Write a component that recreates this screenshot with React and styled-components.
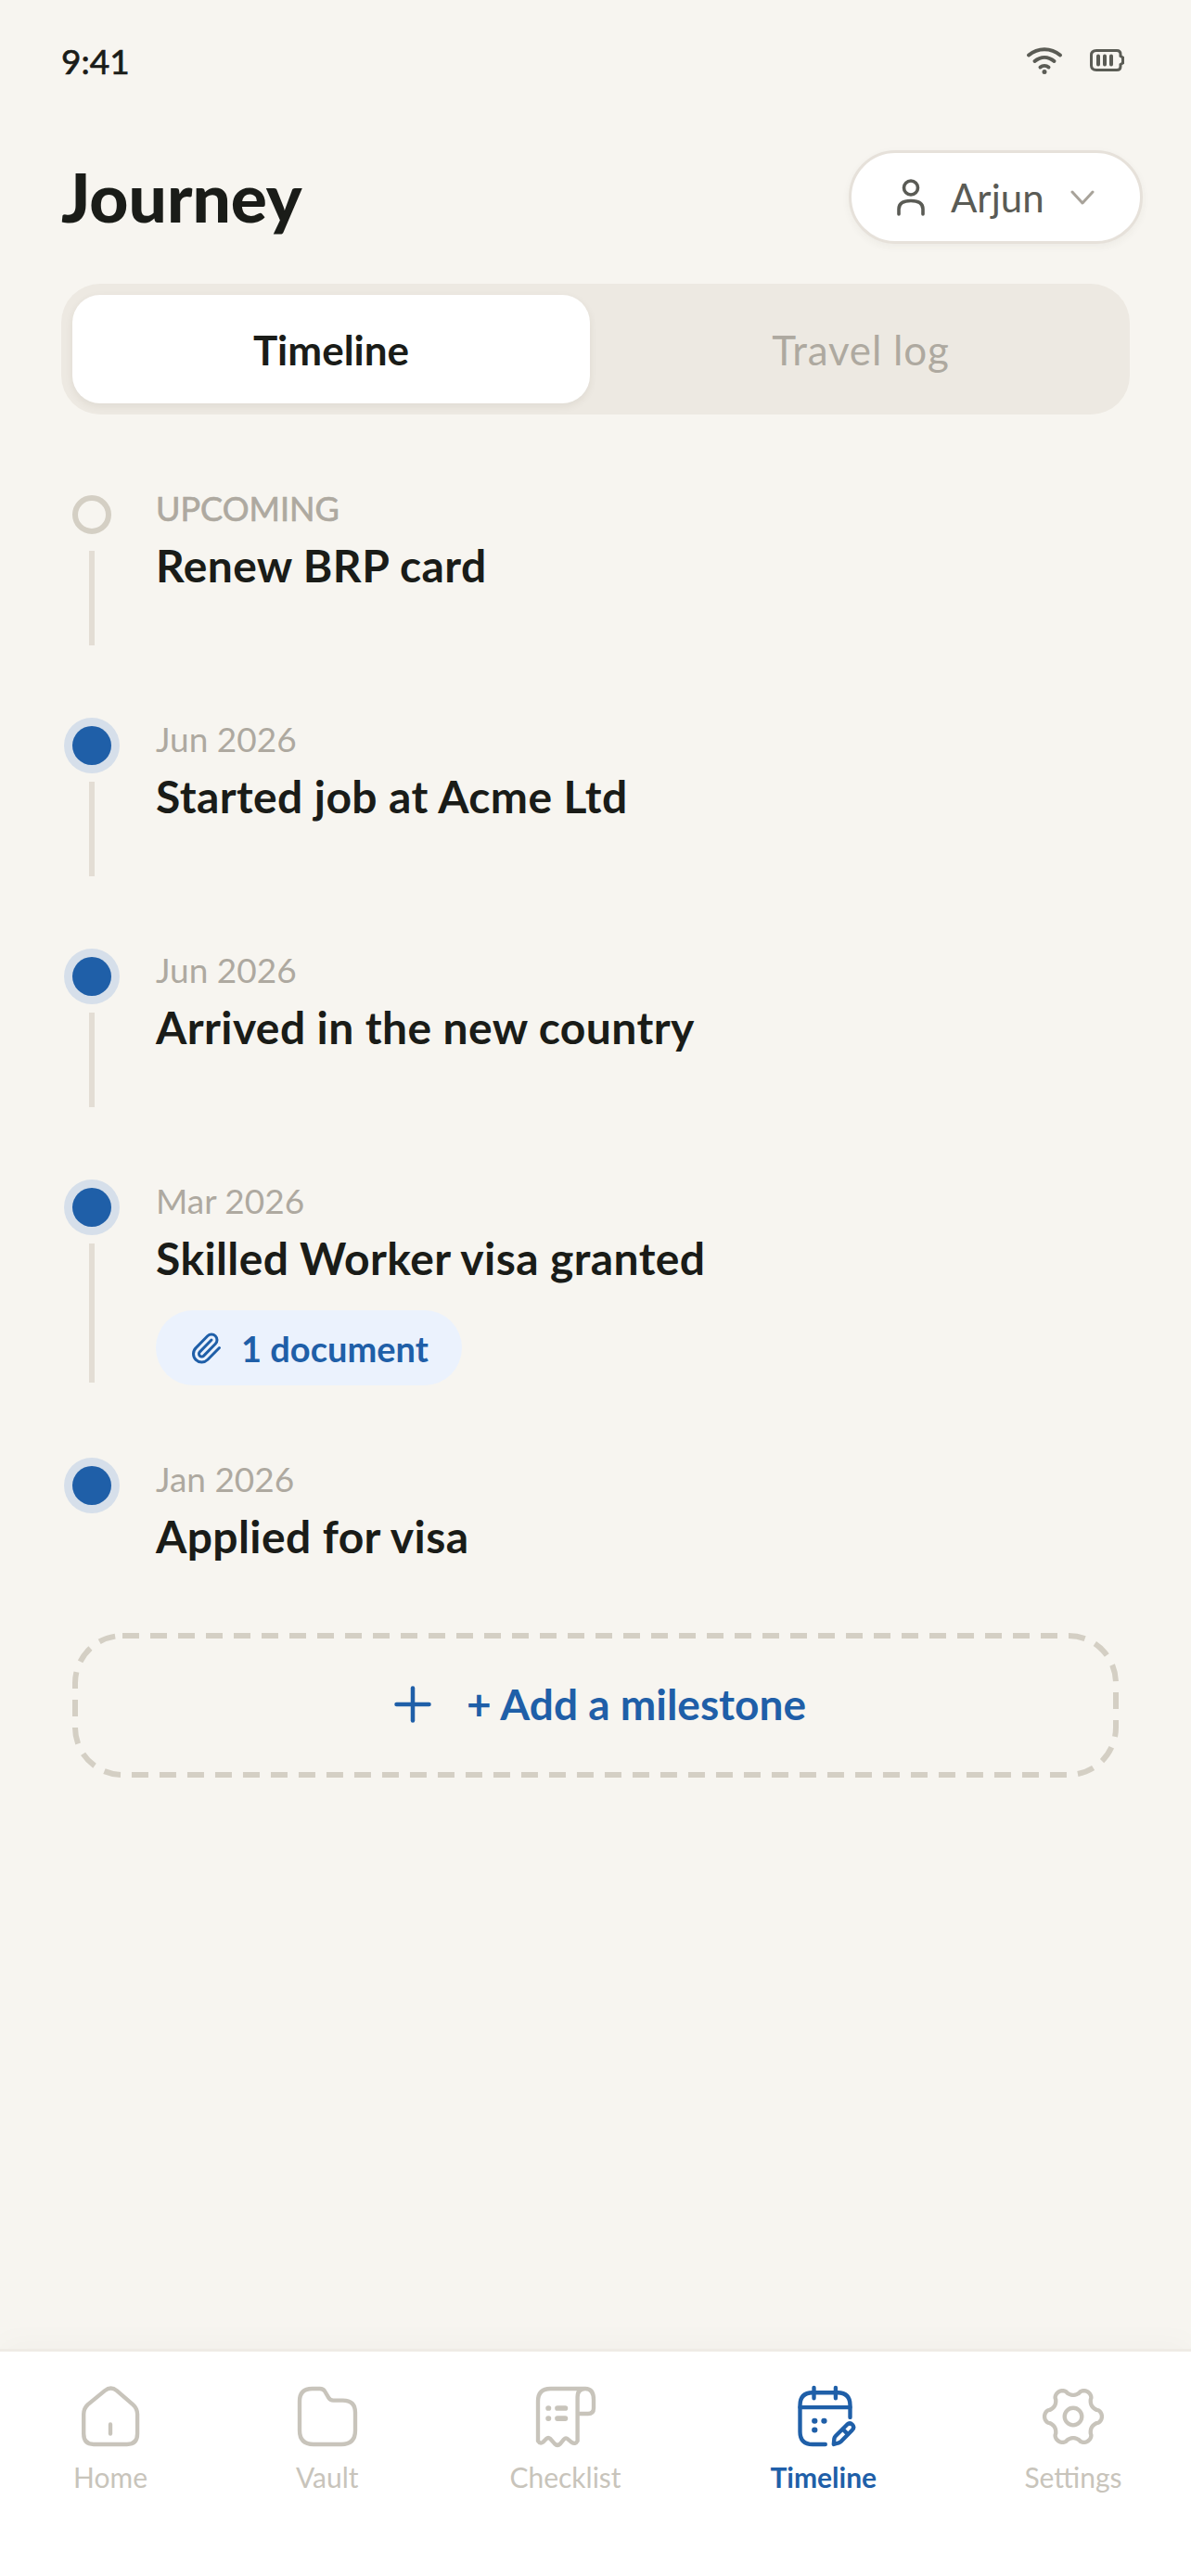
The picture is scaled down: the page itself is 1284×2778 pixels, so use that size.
import React from "react";
import styled, { createGlobalStyle } from "styled-components";
import { Paperclip, Plus } from "lucide-react";

const Global = createGlobalStyle`
  html, body { margin: 0; padding: 0; background: #F7F5F0; }
  * { box-sizing: border-box; }
`;

const FONT = `"Lato", "Open Sans", sans-serif`;
const BLUE = "#1F5FA8";

const Screen = styled.div`
  width: 1284px;
  height: 2778px;
  display: flex;
  flex-direction: column;
  background: #F7F5F0;
  font-family: ${FONT};
  color: #1A1C18;
`;
const Main = styled.main`
  flex: 1;
  padding: 0 66px;
  display: flex;
  flex-direction: column;
`;
const StatusBar = styled.div`
  height: 130px;
  display: flex;
  align-items: center;
  justify-content: space-between;
  padding-right: 6px;
`;
const Time = styled.span`
  font-size: 37px;
  font-weight: 400;
  -webkit-text-stroke: 0.7px #1A1C18;
  color: #1A1C18;
`;
const StatusIcons = styled.div`
  display: flex;
  align-items: center;
  gap: 29px;
`;
const Header = styled.header`
  margin: 32px -14px 0 0;
  display: flex;
  align-items: center;
  justify-content: space-between;
`;
const Title = styled.h1`
  margin: 0;
  font-size: 73px;
  font-weight: 900;
  letter-spacing: 0;
  line-height: 101px;
`;
const Picker = styled.button`
  width: 317px;
  height: 101px;
  border: 3px solid #E6E1DA;
  border-radius: 51px;
  background: #fff;
  display: flex;
  align-items: center;
  padding: 0 0 0 48px;
  font: 400 42px ${FONT};
  color: #5A5B55;
  box-shadow: 0 3px 9px rgba(60, 50, 30, 0.05);
`;
const PickerName = styled.span`
  margin-left: 27px;
  margin-right: 28px;
`;
const Tabs = styled.div`
  margin-top: 43px;
  height: 141px;
  background: #EDE9E2;
  border-radius: 42px;
  padding: 12px;
  display: grid;
  grid-template-columns: 558px 1fr;
`;
const Tab = styled.div`
  display: flex;
  align-items: center;
  justify-content: center;
  font-size: 44px;
  padding-left: ${(p) => (p.$active ? 0 : "14px")};
  letter-spacing: ${(p) => (p.$active ? "0" : "0.8px")};
  font-weight: ${(p) => (p.$active ? 700 : 400)};
  color: ${(p) => (p.$active ? "#1A1C18" : "#AEA9A0")};
  background: ${(p) => (p.$active ? "#fff" : "transparent")};
  border-radius: 30px;
  box-shadow: ${(p) => (p.$active ? "0 3px 9px rgba(60,50,30,0.08)" : "none")};
`;
const Timeline = styled.div`
  margin-top: 78px;
  display: flex;
  flex-direction: column;
`;
const Row = styled.div`
  display: grid;
  grid-template-columns: 66px 1fr;
  column-gap: 36px;
  padding-bottom: ${(p) => (p.$last ? 0 : p.$withDoc ? "78px" : "75px")};
  min-height: ${(p) => (p.$last ? "174px" : "249px")};
`;
const Rail = styled.div`
  display: flex;
  flex-direction: column;
  align-items: center;
`;
const DotSlot = styled.div`
  width: 60px;
  height: 60px;
  display: flex;
  align-items: center;
  justify-content: center;
  flex: none;
`;
const Dot = styled.div`
  width: 42px;
  height: 42px;
  border-radius: 50%;
  background: ${(p) => (p.$upcoming ? "transparent" : BLUE)};
  border: ${(p) => (p.$upcoming ? "6px solid #D4CFC4" : "none")};
  box-shadow: ${(p) => (p.$upcoming ? "none" : "0 0 0 9px #D6DFEA")};
`;
const Line = styled.div`
  width: 6px;
  flex: 1;
  margin: 9px 0 3px;
  background: #E3DDD4;
`;
const Body = styled.div`
  display: flex;
  flex-direction: column;
  align-items: flex-start;
`;
const When = styled.div`
  font-size: ${(p) => (p.$caps ? "36px" : "37px")};
  line-height: 48px;
  margin-top: -1px;
  color: #AEA9A0;
  letter-spacing: 0;
  font-weight: 400;
  -webkit-text-stroke: ${(p) => (p.$caps ? "0.7px #AEA9A0" : "0")};
`;
const Name = styled.div`
  font-size: 48px;
  line-height: 60px;
  font-weight: 700;
  margin-top: 8px;
  letter-spacing: 0.4px;
  color: #1A1C18;
`;
const Chip = styled.div`
  margin-top: 26px;
  width: 330px;
  height: 81px;
  border-radius: 41px;
  background: #EBF2FD;
  color: ${BLUE};
  display: flex;
  align-items: center;
  padding-left: 36px;
  gap: 20px;
  font-size: 38px;
  font-weight: 700;
`;
const AddButton = styled.button`
  position: relative;
  margin: 15px 12px 0;
  height: 156px;
  border: 0;
  padding: 0 0 3px;
  background: transparent;
  display: flex;
  align-items: center;
  justify-content: center;
  gap: 28px;
  color: ${BLUE};
  font: 700 46px ${FONT};
`;
const DashedOutline = styled.svg`
  position: absolute;
  inset: 0;
  width: 100%;
  height: 100%;
  fill: none;
  stroke: #D4CFC4;
  stroke-width: 6;
  stroke-dasharray: 18 12;
`;
const Nav = styled.nav`
  height: 245px;
  flex: none;
  background: #fff;
  border-top: 3px solid #EFEBE5;
  box-shadow: 0 -8px 30px rgba(60, 50, 30, 0.025);
  display: flex;
  justify-content: space-between;
  align-items: flex-start;
  padding: 34px 74px 0 80px;
`;
const NavItem = styled.div`
  display: flex;
  flex-direction: column;
  align-items: center;
  width: ${(p) => p.$w}px;
  color: ${(p) => (p.$active ? BLUE : "#C8C4BB")};
  font-size: 30px;
  line-height: 38px;
  font-weight: ${(p) => (p.$active ? 700 : 400)};
`;
const NavIcon = styled.svg`
  width: 72px;
  height: 72px;
  flex: none;
  fill: none;
  stroke: currentColor;
  stroke-width: 1.45;
  stroke-linecap: round;
  stroke-linejoin: round;
`;
const NavLabel = styled.span`
  margin-top: 10px;
  white-space: nowrap;
`;

const Wifi = () => (
  <svg width="40" height="30" viewBox="0 0 40 30" fill="none" stroke="#5B5C55" strokeWidth="4" strokeLinecap="round">
    <path d="M3 9.5C13 1 27 1 37 9.5" />
    <path d="M9.5 16C16 10.5 24 10.5 30.5 16" />
    <path d="M15.5 22.5C18 20.5 22 20.5 24.5 22.5" />
    <circle cx="20" cy="27.5" r="1" strokeWidth="3" fill="#5B5C55" />
  </svg>
);
const Battery = () => (
  <svg width="37" height="24" viewBox="0 0 37 24" fill="none" stroke="#5B5C55">
    <path d="M7 1.5H29Q33 1.5 33 5.5V7.5L35.5 9V15L33 16.5V18.5Q33 22.5 29 22.5H7Q1.5 22.5 1.5 17.5V6.5Q1.5 1.5 7 1.5Z" strokeWidth="3" />
    <path d="M9 7.5V16.5M16 7.5V16.5M23 7.5V16.5" strokeWidth="4" strokeLinecap="round" />
  </svg>
);
const UserIcon = () => (
  <svg width="32" height="40" viewBox="0 0 32 40" fill="none" stroke="#5A5B55" strokeWidth="3.6" strokeLinecap="round">
    <circle cx="16" cy="9.5" r="7.5" />
    <path d="M3 38V32.5C3 26.5 8 23.5 16 23.5S29 26.5 29 32.5V38" />
  </svg>
);
const Chevron = () => (
  <svg width="26" height="16" viewBox="0 0 26 16" fill="none" stroke="#A8A39A" strokeWidth="3" strokeLinecap="round" strokeLinejoin="round">
    <path d="M2 2L13 14L24 2" />
  </svg>
);

const gearPath = (() => {
  const pts = [];
  for (let i = 0; i < 180; i++) {
    const t = (i / 180) * Math.PI * 2;
    const c = Math.cos(6 * t);
    const r = 9 + 1.3 * Math.sign(c) * Math.pow(Math.abs(c), 0.65);
    pts.push(`${(12 + r * Math.cos(t)).toFixed(2)} ${(12 + r * Math.sin(t)).toFixed(2)}`);
  }
  return `M${pts.join("L")}Z`;
})();

const icons = {
  home: (
    <>
      <path d="M10 2.7Q12.2 1 14.3 2.7L20 7.6Q21.7 9.1 21.7 11.2V18.2Q21.7 22 18 22H6Q2.4 22 2.4 18.2V11.2Q2.4 9.1 3.9 7.7Z" />
      <path d="M12 14.8V18.2" />
    </>
  ),
  vault: (
    <path d="M6.5 2H9.3Q10.5 2 11.1 3L12.4 5.2Q13 6.2 14.1 6.2H17.5Q22 6.2 22 10.6V17Q22 22 17 22H7Q2 22 2 17V6.5Q2 2 6.5 2Z" />
  ),
  checklist: (
    <>
      <path d="M19 2H6.5Q2 2 2 6.5V20.8Q2.8 22 3.8 21.2L5 20Q5.7 19.4 6.4 20L8 21.8Q9 22.8 10 21.8L11.3 20.2Q12 19.4 12.8 20.2L14 21.2Q15.5 22.2 16.2 20.8V5Q16.2 2 19 2Q22 2 22 6V9Q22 11 20 11H16.2" />
      <path d="M5.7 9H5.8M5.7 12.7H5.8M9 9H11.8M9 12.7H11.8" strokeWidth="1.9" />
    </>
  ),
  timeline: (
    <>
      <path d="M12.6 22H8Q3.5 22 3.5 17.5V8Q3.5 3.4 8 3.4H17Q21.5 3.4 21.5 8V12.3" />
      <path d="M8.5 1.6V5.4M16.3 1.6V5.4M3.5 8.7H21.5" />
      <path d="M8.7 13.6H8.8M12.1 13.6H12.2M8.7 16.8H8.8" strokeWidth="2" />
      <path d="M15.6 22L15.8 19.9Q15.9 19.4 16.3 19L20.4 14.9Q21.4 14 22.3 14.9Q23.2 15.8 22.3 16.8L18.2 21Q17.8 21.4 17.3 21.5Z" />
      <path d="M18.9 16.6L20.6 18.3" />
    </>
  ),
  settings: (
    <>
      <path d={gearPath} />
      <circle cx="12" cy="12" r="3.1" />
    </>
  ),
};

const events = [
  { when: "UPCOMING", caps: true, name: "Renew BRP card", upcoming: true },
  { when: "Jun 2026", name: "Started job at Acme Ltd" },
  { when: "Jun 2026", name: "Arrived in the new country" },
  { when: "Mar 2026", name: "Skilled Worker visa granted", doc: "1 document" },
  { when: "Jan 2026", name: "Applied for visa", last: true },
];

const tabs = [
  { key: "home", label: "Home", w: 78 },
  { key: "vault", label: "Vault", w: 72 },
  { key: "checklist", label: "Checklist", w: 124 },
  { key: "timeline", label: "Timeline", w: 115, active: true },
  { key: "settings", label: "Settings", w: 106 },
];

export default function App() {
  return (
    <Screen>
      <Global />
      <Main>
        <StatusBar>
          <Time>9:41</Time>
          <StatusIcons>
            <Wifi />
            <Battery />
          </StatusIcons>
        </StatusBar>
        <Header>
          <Title>Journey</Title>
          <Picker>
            <UserIcon />
            <PickerName>Arjun</PickerName>
            <Chevron />
          </Picker>
        </Header>
        <Tabs>
          <Tab $active>Timeline</Tab>
          <Tab>Travel log</Tab>
        </Tabs>
        <Timeline>
          {events.map((e) => (
            <Row key={e.name} $last={e.last} $withDoc={!!e.doc}>
              <Rail>
                <DotSlot>
                  <Dot $upcoming={e.upcoming} />
                </DotSlot>
                {!e.last && <Line />}
              </Rail>
              <Body>
                <When $caps={e.caps}>{e.when}</When>
                <Name>{e.name}</Name>
                {e.doc && (
                  <Chip>
                    <Paperclip size={36} strokeWidth={2} />
                    {e.doc}
                  </Chip>
                )}
              </Body>
            </Row>
          ))}
        </Timeline>
        <AddButton>
          <DashedOutline viewBox="0 0 1128 156">
            <rect x="3" y="3" width="1122" height="150" rx="51" />
          </DashedOutline>
          <Plus size={60} strokeWidth={1.8} />+ Add a milestone
        </AddButton>
      </Main>
      <Nav>
        {tabs.map((t) => (
          <NavItem key={t.key} $active={t.active} $w={t.w}>
            <NavIcon viewBox="0 0 24 24">{icons[t.key]}</NavIcon>
            <NavLabel>{t.label}</NavLabel>
          </NavItem>
        ))}
      </Nav>
    </Screen>
  );
}
